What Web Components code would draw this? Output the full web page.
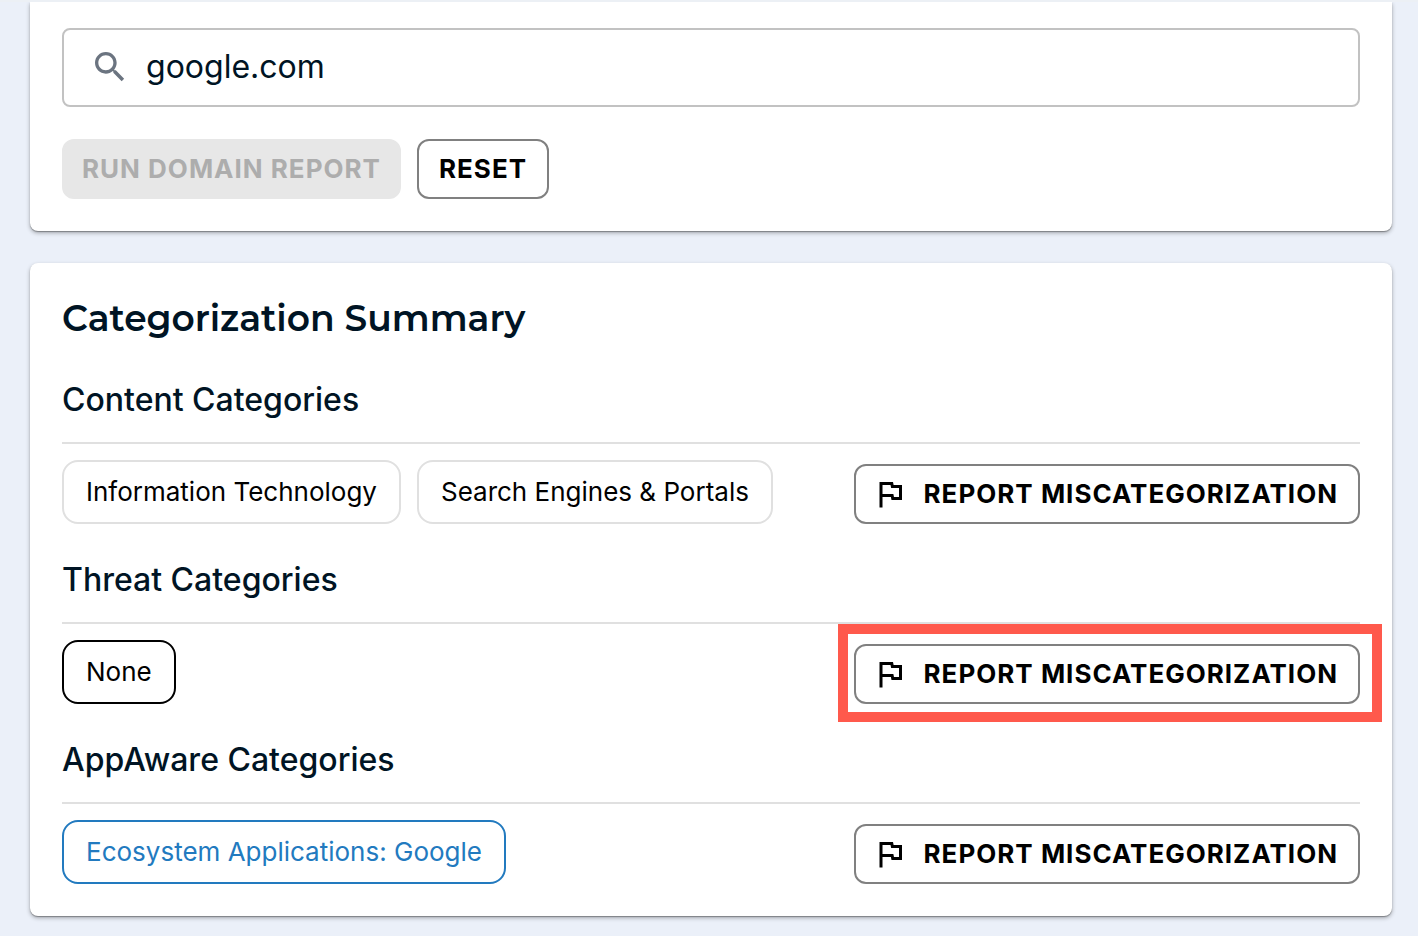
<!DOCTYPE html>
<html lang="en">
<head>
<meta charset="utf-8">
<meta name="viewport" content="width=device-width, initial-scale=1">
<title>Domain Report</title>
<style>
body{margin:0;background:#ebf0f9;color:#001424;font-family:Inter,"Open Sans",sans-serif}
</style>
</head>
<body>
<domain-report-page>
  <surface-card class="continued">
    <domain-search value="google.com"></domain-search>
  </surface-card>
  <surface-card>
    <category-summary heading="Categorization Summary">
      <category-section heading="Content Categories">
        <category-chip>Information Technology</category-chip>
        <category-chip>Search Engines &amp; Portals</category-chip>
        <report-button slot="action"></report-button>
      </category-section>
      <category-section heading="Threat Categories">
        <category-chip tone="strong">None</category-chip>
        <report-button slot="action" highlighted></report-button>
      </category-section>
      <category-section heading="AppAware Categories">
        <category-chip tone="link">Ecosystem Applications: Google</category-chip>
        <report-button slot="action"></report-button>
      </category-section>
    </category-summary>
  </surface-card>
</domain-report-page>
<script>
const define = (name, html, setup) => {
  const template = document.createElement('template');
  template.innerHTML = html;
  customElements.define(name, class extends HTMLElement {
    constructor() {
      super();
      this.attachShadow({ mode: 'open' }).append(template.content.cloneNode(true));
    }
    connectedCallback() { if (setup) setup(this, this.shadowRoot); }
  });
};

define('domain-report-page', `
<style>
:host{display:block;border-top:2px solid #ecf0f5}
main{display:flex;flex-direction:column;gap:32px;padding:0 26px 20px 30px;overflow:clip}
</style>
<main><slot></slot></main>`);

define('surface-card', `
<style>
:host{display:block;box-sizing:border-box;padding:32px;border-radius:8px;background:#fff;
  box-shadow:0 1px 1px rgba(0,0,0,.3),0 2px 4px rgba(0,0,0,.3)}
:host(.continued){padding-top:26px;border-radius:0 0 8px 8px}
</style>
<slot></slot>`);

define('action-button', `
<style>
:host{display:block}
button{display:flex;align-items:center;justify-content:center;box-sizing:border-box;min-height:60px;margin:0;
  padding:0 20px;border:2px solid #808080;border-radius:12px;background:#fff;color:#000;
  font:700 26px/32px Inter,"Open Sans",sans-serif;letter-spacing:1px;text-transform:uppercase;white-space:nowrap;cursor:pointer}
button:disabled{padding:0 18px;border-color:#e7e7e7;background:#e7e7e7;color:#adadad;cursor:default}
</style>
<button type="button"><slot name="icon"></slot><slot></slot></button>`,
(host, root) => { root.querySelector('button').disabled = host.hasAttribute('disabled'); });

define('domain-search', `
<style>
:host{display:block}
form{display:flex;flex-direction:column;gap:32px}
label{display:flex;align-items:center;gap:16px;box-sizing:border-box;min-height:79px;padding:0 26px 2px;
  border:2px solid #c2c2c2;border-radius:8px}
svg{flex:none;width:40px;height:40px;fill:#6b7480}
input{flex:1;min-width:0;padding:0;border:0;outline:0;background:none;color:#001424;font:400 32px/40px Inter,"Open Sans",sans-serif}
div{display:flex;flex-wrap:wrap;gap:16px}
</style>
<form>
  <label>
    <svg viewBox="0 0 24 24" aria-hidden="true"><path d="M15.5 14h-.79l-.28-.27C15.41 12.59 16 11.11 16 9.5 16 5.91 13.09 3 9.5 3S3 5.91 3 9.5 5.91 16 9.5 16c1.61 0 3.09-.59 4.23-1.57l.27.28v.79l5 4.99L20.49 19l-4.99-5zm-6 0C7.01 14 5 11.99 5 9.5S7.01 5 9.5 5 14 7.01 14 9.5 11.99 14 9.5 14z"/></svg>
    <input type="text" aria-label="Domain">
  </label>
  <div>
    <action-button disabled>Run Domain Report</action-button>
    <action-button>Reset</action-button>
  </div>
</form>`,
(host, root) => { root.querySelector('input').value = host.getAttribute('value'); });

define('category-summary', `
<style>
:host{display:flex;flex-direction:column;gap:36px}
h2{margin:0;padding-bottom:3px;font:600 36px/46px Montserrat,Inter,sans-serif}
</style>
<h2></h2>
<slot></slot>`,
(host, root) => { root.querySelector('h2').textContent = host.getAttribute('heading'); });

define('category-section', `
<style>
:host{display:block}
h3{margin:0;padding-bottom:22px;border-bottom:2px solid #e0e0e0;font:500 32px/40px Inter,"Open Sans",sans-serif}
.row{display:flex;align-items:flex-end;justify-content:space-between;gap:16px;padding-top:16px}
.chips{display:flex;flex-wrap:wrap;gap:16px}
</style>
<h3></h3>
<div class="row"><div class="chips"><slot></slot></div><slot name="action"></slot></div>`,
(host, root) => { root.querySelector('h3').textContent = host.getAttribute('heading'); });

define('category-chip', `
<style>
:host{display:flex;align-items:center;box-sizing:border-box;min-height:64px;padding:0 22px;border:2px solid #e0e0e0;
  border-radius:16px;color:#000;font-size:26px;line-height:32px;white-space:nowrap}
:host([tone=strong]){border-color:#000}
:host([tone=link]){border-color:#227abf;color:#227abf}
</style>
<slot></slot>`);

define('report-button', `
<style>
:host{display:block;position:relative;flex:none}
:host([highlighted])::after{content:"";position:absolute;inset:-20px -22px -18px -16px;border:10px solid #ff594c;pointer-events:none}
svg{flex:none;width:36px;height:36px;margin:0 16px 0 -4px;fill:#000}
</style>
<action-button>
  <svg slot="icon" viewBox="0 0 24 24" aria-hidden="true"><path d="M12.36 6l.4 2H18v6h-3.36l-.4-2H7V6h5.36M14 4H5v17h2v-7h5.6l.4 2h7V6h-5.6L14 4z"/></svg>
  Report Miscategorization
</action-button>`);
</script>
</body>
</html>
